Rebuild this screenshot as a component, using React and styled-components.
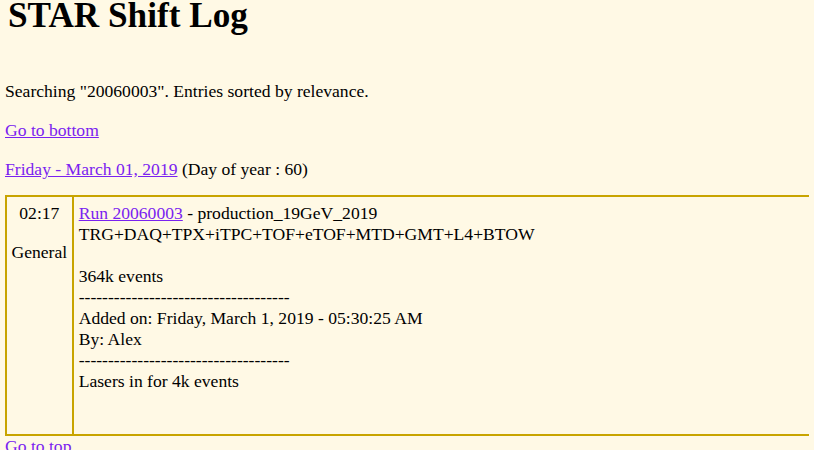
import React from "react";
import styled, { createGlobalStyle } from "styled-components";

const GlobalStyle = createGlobalStyle`
  html, body { overflow: hidden; }
  body {
    margin: 0 5px;
    background: #fff9e5;
    color: #000;
    font-family: "Liberation Serif", "Times New Roman", serif;
    font-size: 17.6px;
  }
`;

const Title = styled.h1`
  font-size: 35.2px;
  font-weight: bold;
  margin: -4px 0 0 3px;
  line-height: 40px;
`;

const Para = styled.p`
  margin: ${(p) => p.$top || "18px"} 0 ${(p) => p.$bottom || "18px"};
  line-height: 21px;
`;

const Link = styled.a`
  color: #7a22f0;
  text-decoration: underline;
`;

const EntryTable = styled.table`
  border-collapse: collapse;
  width: 1100px;
  border: 2px solid #c8a400;
`;

const TimeCell = styled.td`
  border: 2px solid #c8a400;
  padding: 6px 4.5px 5px;
  width: 1px;
  white-space: nowrap;
  vertical-align: top;
  text-align: center;
  line-height: 21px;
`;

const Category = styled.div`
  margin-top: 18px;
`;

const BodyCell = styled.td`
  border: 2px solid #c8a400;
  padding: 6px 5px 42px;
  vertical-align: top;
  line-height: 21px;
`;

const Line = styled.div`
  min-height: 21px;
`;

const Bottom = styled.div`
  line-height: 21px;
`;

export default function App() {
  return (
    <>
      <GlobalStyle />
      <Title>STAR Shift Log</Title>
      <Para $top="45px">Searching "20060003". Entries sorted by relevance.</Para>
      <Para>
        <Link href="#bottom">Go to bottom</Link>
      </Para>
      <Para $bottom="15px">
        <Link href="#day">Friday - March 01, 2019</Link> (Day of year : 60)
      </Para>
      <EntryTable>
        <tbody>
          <tr>
            <TimeCell>
              <div>02:17</div>
              <Category>General</Category>
            </TimeCell>
            <BodyCell>
              <Line>
                <Link href="#run">Run 20060003</Link> - production_19GeV_2019
              </Line>
              <Line>TRG+DAQ+TPX+iTPC+TOF+eTOF+MTD+GMT+L4+BTOW</Line>
              <Line />
              <Line>364k events</Line>
              <Line>------------------------------------</Line>
              <Line>Added on: Friday, March 1, 2019 - 05:30:25 AM</Line>
              <Line>By: Alex</Line>
              <Line>------------------------------------</Line>
              <Line>Lasers in for 4k events</Line>
            </BodyCell>
          </tr>
        </tbody>
      </EntryTable>
      <Bottom>
        <Link href="#top">Go to top</Link>
      </Bottom>
    </>
  );
}
